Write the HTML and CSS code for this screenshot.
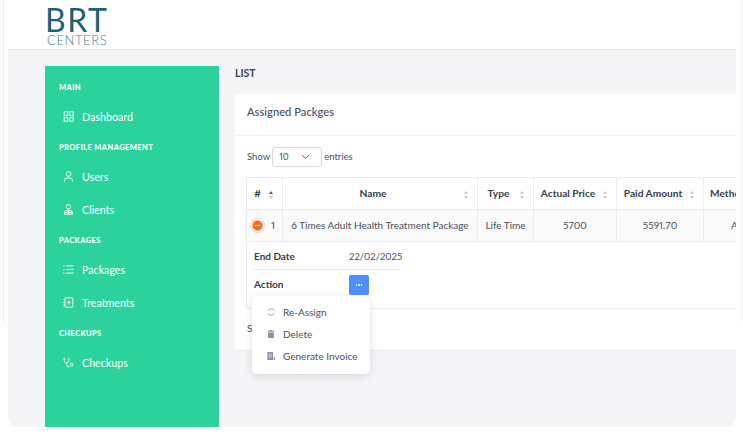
FILE: index.html
```html
<!DOCTYPE html>
<html lang="en">
<head>
    <meta charset="UTF-8">
    <meta name="viewport" content="width=device-width, initial-scale=1.0">
    <title>Assigned Packages</title>
    <link rel="stylesheet" href="styles.css">
</head>
<body>
    <div class="page">
        <div class="frame">
            <header class="topbar">
                <div class="logo">
                    <span class="logo-main">BRT</span>
                    <span class="logo-sub">CENTERS</span>
                </div>
            </header>
            <div class="layout">
                <nav class="sidebar">
                    <div class="nav-label">Main</div>
                    <a class="nav-item">
                        <svg class="nav-icon" viewBox="0 0 14 14"><rect x="1.5" y="1" width="4.500" height="5"/><rect x="8.500" y="1" width="4.500" height="5"/><rect x="1.500" y="8.500" width="4.500" height="4.500"/><rect x="8.500" y="8.500" width="4.500" height="4.500"/></svg>
                        Dashboard
                    </a>
                    <div class="nav-label">Profile Management</div>
                    <a class="nav-item">
                        <svg class="nav-icon" viewBox="0 0 14 14"><circle cx="7" cy="3.800" r="3"/><path d="M2 13.500v-1.500a3 3 0 0 1 3-3h4a3 3 0 0 1 3 3v1.500"/></svg>
                        Users
                    </a>
                    <a class="nav-item">
                        <svg class="nav-icon" viewBox="0 0 14 14"><circle cx="7" cy="3.600" r="2.800"/><path d="M2 13v-2a2.600 2.600 0 0 1 2.600-2.600h4.800a2.600 2.600 0 0 1 2.600 2.600v2zM2 10.800h10M7 8.400v4.600"/></svg>
                        Clients
                    </a>
                    <div class="nav-label">Packages</div>
                    <a class="nav-item">
                        <svg class="nav-icon" viewBox="0 0 14 14"><path d="M4 2.500H13.500M4 7H13.500M4 11.500H13.500M.5 2.500h1.500M.5 7h1.500M.5 11.500h1.500"/></svg>
                        Packages
                    </a>
                    <a class="nav-item">
                        <svg class="nav-icon" viewBox="0 0 14 14"><rect x="2.500" y="1" width="10" height="12" rx="1"/><path d="M7.500 4.500v5M5 7h5M.5 3.500h2M.5 7h2M.5 10.500h2"/></svg>
                        Treatments
                    </a>
                    <div class="nav-label">Checkups</div>
                    <a class="nav-item">
                        <svg class="nav-icon" viewBox="0 0 14 14"><path d="M1.500 1v3.500a3 3 0 0 0 6 0V1M4.500 7.500v2a3 3 0 0 0 3 3h1"/><circle cx="11" cy="9.800" r="1.800"/></svg>
                        Checkups
                    </a>
                </nav>
                <main class="content">
                    <h1 class="page-title">LIST</h1>
                    <section class="card">
                        <div class="card-head">Assigned Packges</div>
                        <div class="card-body">
                            <div class="length-row">
                                Show
                                <span class="length-select">
                                    10
                                    <svg class="chevron" viewBox="0 0 10 6"><path d="M1 1l4 3.500L9 1"/></svg>
                                </span>
                                entries
                            </div>
                            <table class="data-table">
                                <colgroup>
                                    <col class="col-num">
                                    <col class="col-name">
                                    <col class="col-type">
                                    <col class="col-price">
                                    <col class="col-paid">
                                    <col class="col-method">
                                </colgroup>
                                <thead>
                                    <tr>
                                        <th class="sortable active">#</th>
                                        <th class="sortable">Name</th>
                                        <th class="sortable">Type</th>
                                        <th class="sortable">Actual Price</th>
                                        <th class="sortable">Paid Amount</th>
                                        <th class="method-head">Method</th>
                                    </tr>
                                </thead>
                                <tbody>
                                    <tr class="main-row">
                                        <td class="num-cell"><span class="collapse-btn"></span>1</td>
                                        <td>6 Times Adult Health Treatment Package</td>
                                        <td>Life Time</td>
                                        <td>5700</td>
                                        <td>5591.70</td>
                                        <td class="method-cell">Admin</td>
                                    </tr>
                                    <tr class="child-row">
                                        <td colspan="6">
                                            <div class="detail-list">
                                                <div class="detail-row">
                                                    <span class="detail-key">End Date</span>
                                                    <span class="detail-date">22/02/2025</span>
                                                </div>
                                                <div class="detail-row">
                                                    <span class="detail-key">Action</span>
                                                    <span class="action-btn"><i></i><i></i><i></i></span>
                                                </div>
                                            </div>
                                            <div class="menu">
                                                <a class="menu-item">
                                                    <svg class="menu-icon" viewBox="0 0 10 10"><path class="ring" d="M8.800 3.500A4 4 0 0 0 1.300 3.500M1.200 6.500A4 4 0 0 0 8.700 6.500"/></svg>
                                                    Re-Assign
                                                </a>
                                                <a class="menu-item">
                                                    <svg class="menu-icon" viewBox="0 0 10 10"><path class="fill" d="M3.500 0h3v1h3v1.200H.5V1h3zM1.300 3h7.400v7H1.300z"/></svg>
                                                    Delete
                                                </a>
                                                <a class="menu-item">
                                                    <svg class="menu-icon" viewBox="0 0 10 10"><path class="fill" d="M.5 0h7v10H.5zM8.200 6.500H10V10H8.200z"/><path class="cut" d="M2 2.500h4M2 4.500h4M2 6.500h4"/></svg>
                                                    Generate Invoice
                                                </a>
                                            </div>
                                        </td>
                                    </tr>
                                </tbody>
                            </table>
                            <div class="table-info">Showing 1 to 1 of 1 entries</div>
                        </div>
                    </section>
                </main>
            </div>
        </div>
    </div>
</body>
</html>
```

FILE: styles.css
```css
* {
    box-sizing: border-box;
}
html, body {
    margin: 0;
    padding: 0;
    height: 100%;
    overflow: hidden;
    background-color: #fff;
}
body {
    font-family: "Lato", "Inter", sans-serif;
    font-size: 10px;
    font-variant-numeric: proportional-nums;
    color: #4b4f5c;
}
.page {
    width: 739px;
    height: 322px;
    margin-left: 3px;
    padding: 0 4px;
    border-left: 1px solid #ededed;
    border-right: 1px solid #ededed;
}
.frame {
    width: 728px;
    height: 427px;
    background-color: #f5f5f8;
    border-radius: 0 0 12px 12px;
    overflow: hidden;
    display: flex;
    flex-direction: column;
}
.topbar {
    height: 50px;
    flex: none;
    background-color: #fff;
    border-bottom: 1px solid #e7e7ea;
    padding: 7px 0 0 37px;
}
.logo {
    display: flex;
    flex-direction: column;
    width: 70px;
    color: #1d6275;
}
.logo-main {
    font-size: 32px;
    line-height: 26px;
    letter-spacing: 1.500px;
    font-weight: 400;
}
.logo-sub {
    font-size: 13px;
    line-height: 10px;
    margin: 2px 0 0 2px;
    letter-spacing: .6px;
    font-weight: 300;
    color: #3f7d8d;
}
.layout {
    flex: 1;
    display: flex;
    padding: 16px 0 0 37px;
    min-height: 0;
}
.sidebar {
    width: 174px;
    flex: none;
    background-color: #2cd29c;
    padding-top: 8px;
    color: #fff;
}
.nav-label {
    height: 27px;
    padding-left: 14px;
    font-size: 7.500px;
    font-weight: 900;
    line-height: 27px;
    letter-spacing: .4px;
    text-transform: uppercase;
}
.nav-item {
    height: 33px;
    display: flex;
    align-items: center;
    padding: 0 0 2px 18px;
    font-size: 10.700px;
}
.nav-icon {
    width: 11px;
    height: 11px;
    margin-right: 8px;
    fill: none;
    stroke: #fff;
    stroke-width: 1.200;
}
.content {
    flex: 1;
    min-width: 0;
    padding-left: 16px;
}
.page-title {
    margin: 0;
    height: 12px;
    line-height: 15px;
    font-size: 10.500px;
    font-weight: 700;
    color: #3d4250;
}
.card {
    margin-top: 16px;
    height: 257px;
    background-color: #fff;
    border-radius: 4px 0 0 4px;
    border-bottom: 1px solid #e9e9ec;
}
.card-head {
    height: 42px;
    padding: 0 12px;
    line-height: 35px;
    font-size: 11.200px;
    font-weight: 500;
    border-bottom: 1px solid #f2f2f4;
}
.card-body {
    padding: 0 0 0 11px;
}
.length-row {
    height: 41px;
    display: flex;
    align-items: center;
    gap: 2px;
    padding-left: 1px;
    font-size: 9.500px;
}
.length-select {
    width: 50px;
    height: 20px;
    padding: 0 6px;
    display: flex;
    align-items: center;
    justify-content: space-between;
    border: 1px solid #d9d9de;
    border-radius: 3px;
    font-size: 9px;
}
.chevron {
    width: 9px;
    height: 6px;
    margin-right: 5px;
    fill: none;
    stroke: #4b4f5c;
    stroke-width: 1;
}
.data-table {
    table-layout: fixed;
    width: 541px;
    border-collapse: collapse;
    font-size: 10px;
}
.col-num { width: 36px; }
.col-name { width: 195px; }
.col-type { width: 56px; }
.col-price { width: 83px; }
.col-paid { width: 87px; }
.col-method { width: 84px; }
th, td {
    border: 1px solid #ececee;
    text-align: center;
    padding: 0;
    white-space: nowrap;
}
th {
    height: 32px;
    font-weight: 700;
    font-size: 10.200px;
    color: #383c49;
    background-color: #fff;
    position: relative;
    padding: 0 14px 2px 0;
}
.main-row td {
    height: 32px;
    padding-bottom: 2px;
    background-color: #fafafa;
}
.sortable::before,
.sortable::after {
    content: "";
    position: absolute;
    right: 9px;
    border-left: 2px solid transparent;
    border-right: 2px solid transparent;
}
.sortable::before {
    top: 13px;
    border-bottom: 3px solid #c9c9cf;
}
.sortable::after {
    top: 18px;
    border-top: 3px solid #c9c9cf;
}
.active::before {
    border-bottom-color: #555966;
}
.method-head {
    text-align: left;
    padding-left: 6px;
}
.main-row .method-cell {
    text-align: left;
    padding-left: 27px;
}
.main-row .num-cell {
    text-align: left;
    padding-left: 6px;
}
.collapse-btn {
    display: inline-block;
    width: 9px;
    height: 9px;
    margin-right: 9px;
    vertical-align: -1px;
    border-radius: 50%;
    background:
        linear-gradient(#fff, #fff) center / 5px 1px no-repeat,
        #f26f21;
    box-shadow: 0 0 0 1px #f9a36f, 0 0 0 2px #fff, 0 0 0 3px #d9d9de;
}
.child-row td {
    border-top: 0;
    height: 67px;
    text-align: left;
    position: relative;
    padding: 0 0 0 7px;
    vertical-align: top;
}
.detail-list {
    width: 147px;
}
.detail-row {
    display: flex;
    align-items: center;
    height: 28px;
}
.detail-row:first-child {
    border-bottom: 1px solid #ececee;
}
.detail-key {
    width: 95px;
    flex: none;
    font-weight: 700;
    color: #383c49;
}
.detail-date {
    padding-top: 1px;
    font-size: 9.500px;
}
.action-btn {
    width: 20px;
    height: 20px;
    margin-top: 2px;
    display: flex;
    align-items: center;
    justify-content: center;
    gap: 1px;
    background-color: #4f8ffb;
    border-radius: 2px;
}
.action-btn i {
    width: 1.500px;
    height: 1.500px;
    background-color: #fff;
    border-radius: 50%;
}
.menu {
    position: absolute;
    left: 5px;
    top: 54px;
    width: 118px;
    height: 78px;
    padding: 5px 0;
    display: flex;
    flex-direction: column;
    background-color: #fff;
    border-radius: 5px;
    box-shadow: 0 2px 8px rgba(60, 60, 80, .16);
}
.menu-item {
    height: 22px;
    display: flex;
    align-items: center;
    padding-left: 15px;
    font-size: 10px;
}
.menu-icon {
    width: 8px;
    height: 8px;
    margin-right: 8px;
    overflow: visible;
}
.ring {
    fill: none;
    stroke: #8f90a6;
    stroke-width: 1;
}
.fill {
    fill: #8f90a6;
}
.cut {
    fill: none;
    stroke: #fff;
    stroke-width: .7;
}
.table-info {
    margin-top: 12px;
    padding-left: 1px;
    line-height: 14px;
    font-size: 10px;
}
```
